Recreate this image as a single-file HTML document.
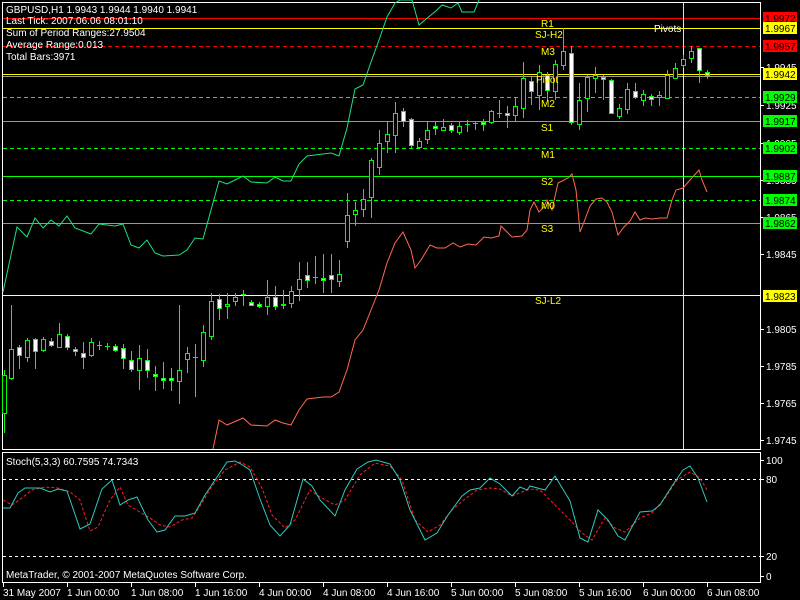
<!DOCTYPE html>
<html><head><meta charset="utf-8"><style>
html,body{margin:0;padding:0;background:#000;width:800px;height:600px;overflow:hidden}
svg{display:block}
text{font-family:"Liberation Sans",sans-serif;font-size:10px}
</style></head><body>
<svg width="800" height="600" viewBox="0 0 800 600" xmlns="http://www.w3.org/2000/svg">
<rect width="800" height="600" fill="#000"/>
<!-- frames -->
<g stroke="#fff" stroke-width="1" fill="none" shape-rendering="crispEdges">
<rect x="2.5" y="2.5" width="758" height="447"/>
<rect x="2.5" y="452.5" width="758" height="130"/>
</g>
<!-- horizontal levels -->
<g shape-rendering="crispEdges" stroke-width="1">
<line x1="3" x2="760" y1="18.5" y2="18.5" stroke="#ff0000"/>
<line x1="3" x2="760" y1="28.5" y2="28.5" stroke="#ffff00"/>
<line x1="3" x2="760" y1="46.5" y2="46.5" stroke="#ff0000" stroke-dasharray="4,3"/>
<line x1="3" x2="760" y1="74.5" y2="74.5" stroke="#ffff00"/>
<line x1="3" x2="760" y1="76.5" y2="76.5" stroke="#999"/>
<line x1="3" x2="760" y1="97.5" y2="97.5" stroke="#00ff00" stroke-dasharray="4,3"/>
<line x1="3" x2="760" y1="121.5" y2="121.5" stroke="#00ff00"/>
<line x1="3" x2="760" y1="148.5" y2="148.5" stroke="#00ff00" stroke-dasharray="4,3"/>
<line x1="3" x2="760" y1="176.5" y2="176.5" stroke="#00ff00"/>
<line x1="3" x2="760" y1="200.5" y2="200.5" stroke="#00ff00" stroke-dasharray="4,3"/>
<line x1="3" x2="760" y1="223.5" y2="223.5" stroke="#00ff00"/>
<line x1="3" x2="760" y1="295.5" y2="295.5" stroke="#ffffa0"/>
<line x1="683.5" x2="683.5" y1="3" y2="449" stroke="#ffff00"/>
</g>
<!-- channel lines -->
<polyline fill="none" stroke="#20e080" stroke-width="1" points="3,292 17,227 27,237 35,218 43,228 51,220 59,226 67,216 75,228 91,234 99,224 115,226 123,224 131,245 139,248 147,240 155,253 163,256 179,255 187,250 195,238 203,239 211,210 219,181 227,184 235,180 243,176 251,182 267,183 275,177 283,181 291,181 299,164 307,156 323,154 331,153 339,156 347,128 355,89 363,85 371,62 379,40 387,17 395,3 400,0 412,0 419,25 437,10 442,5 451,8 458,3 462,12 474,12 479,0"/>
<polyline fill="none" stroke="#ff6a50" stroke-width="1" points="213,449 219,420 227,425 243,418 251,425 267,426 275,420 283,423 291,425 299,410 307,399 323,397 331,397 339,392 347,370 355,340 363,330 371,310 379,290 387,263 395,243 403,232 411,250 415,268 421,260 430,245 437,248 445,248 453,243 460,247 468,244 476,245 484,237 491,238 499,236 501,226 512,237 522,236 527,230 530,210 534,202 539,212 543,208 547,200 552,210 558,183 568,178 572,174 576,190 578,210 580,232 584,222 590,206 596,199 602,198 607,202 612,212 618,235 624,227 630,221 635,212 640,220 645,218 652,219 660,218 667,218 672,200 676,190 683,188 690,180 699,170 702,180 707,192"/>
<!-- candles -->
<g stroke="#00ff00" stroke-width="1" shape-rendering="crispEdges">
<line x1="4.5" x2="4.5" y1="370" y2="433"/><rect x="2.5" y="375.5" width="4" height="38" fill="#000"/>
<line x1="11.5" x2="11.5" y1="305" y2="380"/><rect x="9.5" y="349.5" width="4" height="29" fill="#000"/>
<line x1="19.5" x2="19.5" y1="345" y2="369"/><rect x="17.5" y="347.5" width="4" height="8" fill="#fff"/>
<line x1="27.5" x2="27.5" y1="338" y2="362"/><rect x="25.5" y="340.5" width="4" height="17" fill="#000"/>
<line x1="35.5" x2="35.5" y1="338" y2="369"/><rect x="33.5" y="339.5" width="4" height="12" fill="#fff"/>
<line x1="43.5" x2="43.5" y1="337" y2="352"/><rect x="41.5" y="339.5" width="4" height="11" fill="#000"/>
<line x1="51.5" x2="51.5" y1="338" y2="347"/><rect x="49.5" y="341.5" width="4" height="4" fill="#fff"/>
<line x1="59.5" x2="59.5" y1="323" y2="347"/><rect x="57.5" y="334.5" width="4" height="13" fill="#000"/>
<line x1="67.5" x2="67.5" y1="334" y2="350"/><rect x="65.5" y="336.5" width="4" height="11" fill="#fff"/>
<line x1="75.5" x2="75.5" y1="347" y2="356"/><rect x="73.5" y="349.5" width="4" height="2" fill="#fff"/>
<line x1="83.5" x2="83.5" y1="342" y2="369"/><rect x="81.5" y="353.5" width="4" height="4" fill="#fff"/>
<line x1="91.5" x2="91.5" y1="338" y2="357"/><rect x="89.5" y="342.5" width="4" height="13" fill="#000"/>
<line x1="99.5" x2="99.5" y1="341" y2="350"/><line x1="97" x2="102" y1="345.5" y2="345.5"/>
<line x1="107.5" x2="107.5" y1="343" y2="350"/><line x1="105" x2="110" y1="346.5" y2="346.5"/>
<line x1="115.5" x2="115.5" y1="344" y2="352"/><rect x="113.5" y="346.5" width="4" height="4" fill="#fff"/>
<line x1="123.5" x2="123.5" y1="344" y2="369"/><rect x="121.5" y="348.5" width="4" height="10" fill="#fff"/>
<line x1="131.5" x2="131.5" y1="351" y2="372"/><rect x="129.5" y="360.5" width="4" height="9" fill="#fff"/>
<line x1="139.5" x2="139.5" y1="345" y2="390"/><rect x="137.5" y="358.5" width="4" height="12" fill="#000"/>
<line x1="147.5" x2="147.5" y1="349" y2="378"/><rect x="145.5" y="360.5" width="4" height="10" fill="#fff"/>
<line x1="155.5" x2="155.5" y1="366" y2="391"/><rect x="153.5" y="374.5" width="4" height="2" fill="#fff"/>
<line x1="163.5" x2="163.5" y1="362" y2="389"/><rect x="161.5" y="378.5" width="4" height="2" fill="#fff"/>
<line x1="171.5" x2="171.5" y1="368" y2="391"/><rect x="169.5" y="378.5" width="4" height="2" fill="#fff"/>
<line x1="179.5" x2="179.5" y1="305" y2="404"/><rect x="177.5" y="370.5" width="4" height="11" fill="#000"/>
<line x1="187.5" x2="187.5" y1="347" y2="373"/><rect x="185.5" y="353.5" width="4" height="6" fill="#000"/>
<line x1="195.5" x2="195.5" y1="344" y2="397"/><line x1="193" x2="198" y1="357.5" y2="357.5"/>
<line x1="203.5" x2="203.5" y1="325" y2="367"/><rect x="201.5" y="332.5" width="4" height="28" fill="#000"/>
<line x1="211.5" x2="211.5" y1="293" y2="340"/><rect x="209.5" y="301.5" width="4" height="35" fill="#000"/>
<line x1="219.5" x2="219.5" y1="294" y2="320"/><rect x="217.5" y="299.5" width="4" height="9" fill="#fff"/>
<line x1="227.5" x2="227.5" y1="293" y2="319"/><rect x="225.5" y="304.5" width="4" height="2" fill="#000"/>
<line x1="235.5" x2="235.5" y1="293" y2="306"/><rect x="233.5" y="297.5" width="4" height="4" fill="#000"/>
<line x1="243.5" x2="243.5" y1="290" y2="306"/><line x1="241" x2="246" y1="294.5" y2="294.5"/>
<line x1="251.5" x2="251.5" y1="300" y2="306"/><rect x="249.5" y="302.5" width="4" height="3" fill="#fff"/>
<line x1="259.5" x2="259.5" y1="302" y2="308"/><rect x="257.5" y="304.5" width="4" height="2" fill="#fff"/>
<line x1="267.5" x2="267.5" y1="280" y2="315"/><rect x="265.5" y="297.5" width="4" height="9" fill="#000"/>
<line x1="275.5" x2="275.5" y1="286" y2="310"/><rect x="273.5" y="297.5" width="4" height="9" fill="#fff"/>
<line x1="283.5" x2="283.5" y1="290" y2="309"/><rect x="281.5" y="304.5" width="4" height="1" fill="#fff"/>
<line x1="291.5" x2="291.5" y1="286" y2="308"/><rect x="289.5" y="291.5" width="4" height="12" fill="#000"/>
<line x1="299.5" x2="299.5" y1="262" y2="301"/><rect x="297.5" y="279.5" width="4" height="10" fill="#000"/>
<line x1="307.5" x2="307.5" y1="262" y2="288"/><rect x="305.5" y="275.5" width="4" height="5" fill="#fff"/>
<line x1="315.5" x2="315.5" y1="256" y2="284"/><line x1="313" x2="318" y1="277.5" y2="277.5"/>
<line x1="323.5" x2="323.5" y1="254" y2="293"/><rect x="321.5" y="278.5" width="4" height="2" fill="#fff"/>
<line x1="331.5" x2="331.5" y1="254" y2="293"/><rect x="329.5" y="275.5" width="4" height="4" fill="#fff"/>
<line x1="339.5" x2="339.5" y1="260" y2="287"/><rect x="337.5" y="274.5" width="4" height="7" fill="#000"/>
<line x1="347.5" x2="347.5" y1="193" y2="248"/><rect x="345.5" y="215.5" width="4" height="26" fill="#000"/>
<line x1="355.5" x2="355.5" y1="202" y2="226"/><rect x="353.5" y="210.5" width="4" height="4" fill="#000"/>
<line x1="363.5" x2="363.5" y1="189" y2="217"/><rect x="361.5" y="199.5" width="4" height="10" fill="#000"/>
<line x1="371.5" x2="371.5" y1="158" y2="218"/><rect x="369.5" y="160.5" width="4" height="37" fill="#000"/>
<line x1="379.5" x2="379.5" y1="130" y2="175"/><rect x="377.5" y="143.5" width="4" height="24" fill="#000"/>
<line x1="387.5" x2="387.5" y1="122" y2="153"/><rect x="385.5" y="134.5" width="4" height="7" fill="#000"/>
<line x1="395.5" x2="395.5" y1="102" y2="153"/><rect x="393.5" y="113.5" width="4" height="22" fill="#000"/>
<line x1="403.5" x2="403.5" y1="108" y2="127"/><rect x="401.5" y="111.5" width="4" height="10" fill="#fff"/>
<line x1="411.5" x2="411.5" y1="118" y2="148"/><rect x="409.5" y="119.5" width="4" height="26" fill="#fff"/>
<line x1="419.5" x2="419.5" y1="138" y2="148"/><rect x="417.5" y="141.5" width="4" height="6" fill="#000"/>
<line x1="427.5" x2="427.5" y1="122" y2="144"/><rect x="425.5" y="130.5" width="4" height="9" fill="#000"/>
<line x1="435.5" x2="435.5" y1="122" y2="135"/><rect x="433.5" y="126.5" width="4" height="2" fill="#fff"/>
<line x1="443.5" x2="443.5" y1="119" y2="131"/><rect x="441.5" y="127.5" width="4" height="3" fill="#000"/>
<line x1="451.5" x2="451.5" y1="123" y2="133"/><rect x="449.5" y="125.5" width="4" height="5" fill="#fff"/>
<line x1="459.5" x2="459.5" y1="122" y2="135"/><rect x="457.5" y="126.5" width="4" height="6" fill="#000"/>
<line x1="467.5" x2="467.5" y1="120" y2="132"/><line x1="465" x2="470" y1="124.5" y2="124.5"/>
<line x1="475.5" x2="475.5" y1="122" y2="130"/><line x1="473" x2="478" y1="123.5" y2="123.5"/>
<line x1="483.5" x2="483.5" y1="119" y2="131"/><rect x="481.5" y="122.5" width="4" height="2" fill="#fff"/>
<line x1="491.5" x2="491.5" y1="110" y2="124"/><rect x="489.5" y="111.5" width="4" height="11" fill="#000"/>
<line x1="499.5" x2="499.5" y1="100" y2="118"/><line x1="497" x2="502" y1="113.5" y2="113.5"/>
<line x1="507.5" x2="507.5" y1="106" y2="128"/><rect x="505.5" y="113.5" width="4" height="2" fill="#fff"/>
<line x1="515.5" x2="515.5" y1="97" y2="122"/><rect x="513.5" y="106.5" width="4" height="9" fill="#000"/>
<line x1="523.5" x2="523.5" y1="62" y2="118"/><rect x="521.5" y="78.5" width="4" height="30" fill="#000"/>
<line x1="531.5" x2="531.5" y1="76" y2="105"/><rect x="529.5" y="81.5" width="4" height="10" fill="#fff"/>
<line x1="539.5" x2="539.5" y1="65" y2="110"/><rect x="537.5" y="72.5" width="4" height="23" fill="#000"/>
<line x1="547.5" x2="547.5" y1="72" y2="101"/><rect x="545.5" y="75.5" width="4" height="15" fill="#fff"/>
<line x1="555.5" x2="555.5" y1="60" y2="100"/><rect x="553.5" y="64.5" width="4" height="27" fill="#000"/>
<line x1="563.5" x2="563.5" y1="28" y2="70"/><rect x="561.5" y="51.5" width="4" height="14" fill="#000"/>
<line x1="571.5" x2="571.5" y1="46" y2="125"/><rect x="569.5" y="53.5" width="4" height="69" fill="#fff"/>
<line x1="579.5" x2="579.5" y1="83" y2="130"/><rect x="577.5" y="100.5" width="4" height="24" fill="#000"/>
<line x1="587.5" x2="587.5" y1="75" y2="112"/><rect x="585.5" y="77.5" width="4" height="21" fill="#000"/>
<line x1="595.5" x2="595.5" y1="67" y2="93"/><rect x="593.5" y="75.5" width="4" height="3" fill="#000"/>
<line x1="603.5" x2="603.5" y1="75" y2="100"/><rect x="601.5" y="77.5" width="4" height="2" fill="#fff"/>
<line x1="611.5" x2="611.5" y1="79" y2="114"/><rect x="609.5" y="80.5" width="4" height="33" fill="#fff"/>
<line x1="619.5" x2="619.5" y1="104" y2="119"/><rect x="617.5" y="108.5" width="4" height="8" fill="#000"/>
<line x1="627.5" x2="627.5" y1="83" y2="114"/><rect x="625.5" y="89.5" width="4" height="20" fill="#000"/>
<line x1="635.5" x2="635.5" y1="83" y2="99"/><rect x="633.5" y="91.5" width="4" height="6" fill="#fff"/>
<line x1="643.5" x2="643.5" y1="90" y2="106"/><rect x="641.5" y="94.5" width="4" height="6" fill="#000"/>
<line x1="651.5" x2="651.5" y1="94" y2="106"/><rect x="649.5" y="96.5" width="4" height="3" fill="#fff"/>
<line x1="659.5" x2="659.5" y1="91" y2="106"/><rect x="657.5" y="95.5" width="4" height="2" fill="#000"/>
<line x1="667.5" x2="667.5" y1="70" y2="98"/><rect x="665.5" y="75.5" width="4" height="23" fill="#000"/>
<line x1="675.5" x2="675.5" y1="63" y2="78"/><rect x="673.5" y="68.5" width="4" height="10" fill="#000"/>
<line x1="683.5" x2="683.5" y1="55" y2="68"/><rect x="681.5" y="59.5" width="4" height="6" fill="#000"/>
<line x1="691.5" x2="691.5" y1="46" y2="63"/><rect x="689.5" y="51.5" width="4" height="7" fill="#000"/>
<line x1="699.5" x2="699.5" y1="48" y2="83"/><rect x="697.5" y="48.5" width="4" height="22" fill="#fff"/>
<line x1="707.5" x2="707.5" y1="70" y2="79"/><rect x="705.5" y="72.5" width="4" height="3" fill="#ffff60"/>
</g>
<!-- pivot labels -->
<g fill="#ffff00">
<text x="541" y="27">R1</text>
<text x="535" y="38">SJ-H2</text>
<text x="541" y="55">M3</text>
<text x="536" y="83">Pivot</text>
<text x="541" y="107">M2</text>
<text x="541" y="131">S1</text>
<text x="541" y="158">M1</text>
<text x="541" y="185">S2</text>
<text x="541" y="209">M0</text>
<text x="541" y="232">S3</text>
<text x="535" y="304">SJ-L2</text>
</g>
<text x="654" y="32" fill="#fff">Pivots</text>
<!-- info text -->
<g fill="#fff">
<text x="6" y="13">GBPUSD,H1  1.9943 1.9944 1.9940 1.9941</text>
<text x="6" y="24">Last Tick: 2007.06.06 08:01:10</text>
<text x="6" y="36">Sum of Period Ranges:27.9504</text>
<text x="6" y="48">Average Range:0.013</text>
<text x="6" y="60">Total Bars:3971</text>
</g>
<!-- price axis -->
<g stroke="#fff" shape-rendering="crispEdges">
<line x1="760" x2="764" y1="67.5" y2="67.5"/><line x1="760" x2="764" y1="105.5" y2="105.5"/>
<line x1="760" x2="764" y1="143.5" y2="143.5"/><line x1="760" x2="764" y1="180.5" y2="180.5"/>
<line x1="760" x2="764" y1="217.5" y2="217.5"/><line x1="760" x2="764" y1="254.5" y2="254.5"/>
<line x1="760" x2="764" y1="329.5" y2="329.5"/><line x1="760" x2="764" y1="366.5" y2="366.5"/>
<line x1="760" x2="764" y1="403.5" y2="403.5"/><line x1="760" x2="764" y1="440.5" y2="440.5"/>
<line x1="760" x2="764" y1="460.5" y2="460.5"/><line x1="760" x2="764" y1="479.5" y2="479.5"/>
<line x1="760" x2="764" y1="556.5" y2="556.5"/><line x1="760" x2="764" y1="576.5" y2="576.5"/>
</g>
<g fill="#fff">
<text x="766" y="71">1.9945</text><text x="766" y="109">1.9925</text>
<text x="766" y="147">1.9905</text><text x="766" y="184">1.9885</text>
<text x="766" y="221">1.9865</text><text x="766" y="258">1.9845</text>
<text x="766" y="333">1.9805</text><text x="766" y="370">1.9785</text>
<text x="766" y="407">1.9765</text><text x="766" y="444">1.9745</text>
<text x="766" y="464">100</text><text x="766" y="483">80</text>
<text x="766" y="560">20</text><text x="766" y="580">0</text>
</g>
<!-- price labels -->
<g>
<rect x="763" y="12" width="34" height="12" fill="#ff0000"/><text x="765" y="22" fill="#000">1.9972</text>
<rect x="763" y="22" width="34" height="12" fill="#ffff00"/><text x="765" y="32" fill="#000">1.9967</text>
<rect x="763" y="40" width="34" height="12" fill="#ff0000"/><text x="765" y="50" fill="#000">1.9957</text>
<rect x="763" y="68" width="34" height="12" fill="#ffff00"/><text x="765" y="78" fill="#000">1.9942</text>
<rect x="763" y="91" width="34" height="12" fill="#00ff00"/><text x="765" y="101" fill="#000">1.9929</text>
<rect x="763" y="115" width="34" height="12" fill="#00ff00"/><text x="765" y="125" fill="#000">1.9917</text>
<rect x="763" y="142" width="34" height="12" fill="#00ff00"/><text x="765" y="152" fill="#000">1.9902</text>
<rect x="763" y="170" width="34" height="12" fill="#00ff00"/><text x="765" y="180" fill="#000">1.9887</text>
<rect x="763" y="194" width="34" height="12" fill="#00ff00"/><text x="765" y="204" fill="#000">1.9874</text>
<rect x="763" y="217" width="34" height="12" fill="#00ff00"/><text x="765" y="227" fill="#000">1.9862</text>
<rect x="763" y="290" width="34" height="12" fill="#ffff00"/><text x="765" y="300" fill="#000">1.9823</text>
</g>
<!-- stochastic -->
<g stroke="#fff" stroke-dasharray="3,3" shape-rendering="crispEdges">
<line x1="3" x2="760" y1="479.5" y2="479.5"/>
<line x1="3" x2="760" y1="556.5" y2="556.5"/>
</g>
<polyline fill="none" stroke="#ff2020" stroke-width="1" stroke-dasharray="3,2" points="3,500 12,505 22,498 32,490 45,487 58,488 70,492 80,500 90,531 98,527 110,500 120,487 128,505 138,511 150,518 160,525 170,527 182,520 192,518 200,506 212,486 225,470 240,462 250,467 262,488 272,515 285,528 295,520 310,490 320,497 335,505 345,500 360,475 375,463 390,466 402,480 415,520 428,532 440,525 452,510 465,499 477,490 490,488 500,489 512,496 522,492 530,489 540,490 555,505 570,520 582,533 592,540 605,518 615,528 625,532 640,518 652,513 665,498 677,480 690,472 700,478 707,490"/>
<polyline fill="none" stroke="#30c8c0" stroke-width="1" points="3,508 10,508 18,493 25,488 40,488 50,492 58,489 67,491 80,529 90,524 102,489 112,480 120,505 128,500 137,497 148,520 157,532 165,530 175,516 185,516 195,513 205,495 215,480 227,462 235,461 241,464 250,470 260,499 270,525 280,536 290,525 303,479 312,486 320,500 335,516 345,490 357,469 368,462 376,460 390,464 400,480 410,510 425,540 437,533 448,515 462,496 470,490 480,488 490,478 500,484 512,496 520,487 527,490 530,486 545,490 555,476 570,501 580,538 588,542 598,510 608,520 618,536 625,540 640,512 652,511 660,505 672,486 683,470 690,466 698,478 707,502"/>
<text x="6" y="465" fill="#fff">Stoch(5,3,3) 60.7595 74.7343</text>
<text x="6" y="578" fill="#fff">MetaTrader, © 2001-2007 MetaQuotes Software Corp.</text>
<!-- time axis -->
<g stroke="#fff" shape-rendering="crispEdges">
<line x1="3.5" x2="3.5" y1="583" y2="587"/><line x1="67.5" x2="67.5" y1="583" y2="587"/>
<line x1="131.5" x2="131.5" y1="583" y2="587"/><line x1="195.5" x2="195.5" y1="583" y2="587"/>
<line x1="259.5" x2="259.5" y1="583" y2="587"/><line x1="323.5" x2="323.5" y1="583" y2="587"/>
<line x1="387.5" x2="387.5" y1="583" y2="587"/><line x1="451.5" x2="451.5" y1="583" y2="587"/>
<line x1="515.5" x2="515.5" y1="583" y2="587"/><line x1="579.5" x2="579.5" y1="583" y2="587"/>
<line x1="643.5" x2="643.5" y1="583" y2="587"/><line x1="707.5" x2="707.5" y1="583" y2="587"/>
</g>
<g fill="#fff">
<text x="3" y="596">31 May 2007</text>
<text x="67" y="596">1 Jun 00:00</text>
<text x="131" y="596">1 Jun 08:00</text>
<text x="195" y="596">1 Jun 16:00</text>
<text x="259" y="596">4 Jun 00:00</text>
<text x="323" y="596">4 Jun 08:00</text>
<text x="387" y="596">4 Jun 16:00</text>
<text x="451" y="596">5 Jun 00:00</text>
<text x="515" y="596">5 Jun 08:00</text>
<text x="579" y="596">5 Jun 16:00</text>
<text x="643" y="596">6 Jun 00:00</text>
<text x="707" y="596">6 Jun 08:00</text>
</g>
</svg>
</body></html>
